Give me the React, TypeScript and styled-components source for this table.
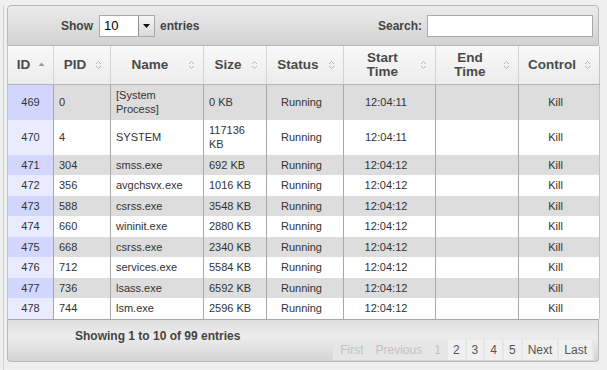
import React from "react"
import styled, { createGlobalStyle } from "styled-components"

const GlobalStyle = createGlobalStyle`
  html, body {
    margin: 0;
    padding: 0;
    background: #efefef;
  }
  body {
    font-family: "Liberation Sans", Arial, sans-serif;
    font-size: 11px;
    color: #333;
  }
`

const Page = styled.div`
  width: 607px;
  height: 370px;
  box-sizing: border-box;
  padding: 5px 8px 0 3px;
`

const Frame = styled.div`
  border-left: 1px solid #d2d2d2;
  padding-left: 3px;
  height: 365px;
`

const Toolbar = styled.div`
  display: flex;
  align-items: center;
  justify-content: space-between;
  height: 39px;
  border: 1px solid #b9b9b9;
  border-radius: 4px 4px 0 0;
  background: linear-gradient(#ececec, #d2d2d2);
  padding: 0 5px 0 53px;
  font-weight: bold;
  font-size: 12px;
  color: #444;
`

const Group = styled.label`
  display: flex;
  align-items: center;
  gap: 5px;
`

const Select = styled.div`
  display: flex;
  height: 20px;
  border: 1px solid #a9a9a9;
  background: #fff;
  margin-left: 1px;
`

const SelectValue = styled.span`
  width: 34px;
  padding-left: 4px;
  line-height: 20px;
  font-weight: normal;
  font-size: 13px;
  color: #000;
`

const SelectButton = styled.span`
  width: 15px;
  border-left: 1px solid #8e8e8e;
  background: linear-gradient(#f6f6f6, #dadada);
  display: flex;
  align-items: center;
  justify-content: center;
`

const SearchInput = styled.div`
  width: 164px;
  height: 20px;
  border: 1px solid #a9a9a9;
  background: #fff;
`

const Table = styled.table`
  width: 592px;
  border-collapse: collapse;
  table-layout: fixed;
  background: #fff;
`

const HeadCell = styled.th<{ $w: number }>`
  position: relative;
  width: ${(p) => p.$w}px;
  height: 38px;
  box-sizing: border-box;
  padding: 0 20px 0 6px;
  background: linear-gradient(#f8f8f8, #ececec);
  border-left: 1px solid #d4d4d4;
  border-bottom: 1px solid #b5b5b5;
  font-size: 13.5px;
  line-height: 14px;
  font-weight: bold;
  color: #4a4a4a;
  text-align: center;
  &:first-child {
    border-left: 1px solid #c4c4c4;
  }
  &:last-child {
    border-right: 1px solid #c4c4c4;
  }
`

const SortIcon = styled.svg`
  position: absolute;
  right: 8px;
  top: 50%;
  margin-top: -5px;
`

const Row = styled.tr<{ $odd: boolean }>`
  background: ${(p) => (p.$odd ? "#dddddd" : "#ffffff")};
`

const Cell = styled.td<{ $center?: boolean; $sorted?: boolean; $odd?: boolean }>`
  padding: 3px 12px 3px 5px;
  line-height: 14.5px;
  border-left: 1px solid #a8a8a8;
  text-align: ${(p) => (p.$center ? "center" : "left")};
  vertical-align: middle;
  color: #333;
  background: ${(p) =>
    p.$sorted ? (p.$odd ? "#d3d6ff" : "#eaebff") : "transparent"};
  &:first-child {
    border-left: 1px solid #c4c4c4;
    padding: 3px 5px;
  }
  &:last-child {
    border-right: 1px solid #c4c4c4;
  }
`

const Footer = styled.div`
  display: flex;
  justify-content: space-between;
  height: 41px;
  border: 1px solid #b9b9b9;
  border-top: 1px solid #a8a8a8;
  border-radius: 0 0 4px 4px;
  background: linear-gradient(#dedede, #ededed 40%, #d4d4d4);
  padding: 0 4px 0 67px;
`

const Info = styled.div`
  padding-top: 9px;
  font-weight: bold;
  font-size: 12px;
  color: #444;
`

const Pager = styled.div`
  align-self: flex-end;
  display: flex;
  gap: 2px;
  margin-bottom: 1px;
  padding: 0 2px;
  background: #e6e6e6;
`

const PageButton = styled.span<{ $disabled?: boolean }>`
  padding: 0 5px;
  height: 20px;
  line-height: 20px;
  font-size: 12px;
  color: ${(p) => (p.$disabled ? "#c2c2c2" : "#555")};
  background: ${(p) => (p.$disabled ? "transparent" : "#f0f0f0")};
`

const columns = [
  { label: "ID", w: 46 },
  { label: "PID", w: 57 },
  { label: "Name", w: 93 },
  { label: "Size", w: 63 },
  { label: "Status", w: 77 },
  { label: "Start Time", w: 92 },
  { label: "End Time", w: 83 },
  { label: "Control", w: 81 },
]

const rows = [
  [469, 0, "[System Process]", "0 KB", "12:04:11"],
  [470, 4, "SYSTEM", "117136 KB", "12:04:11"],
  [471, 304, "smss.exe", "692 KB", "12:04:12"],
  [472, 356, "avgchsvx.exe", "1016 KB", "12:04:12"],
  [473, 588, "csrss.exe", "3548 KB", "12:04:12"],
  [474, 660, "wininit.exe", "2880 KB", "12:04:12"],
  [475, 668, "csrss.exe", "2340 KB", "12:04:12"],
  [476, 712, "services.exe", "5584 KB", "12:04:12"],
  [477, 736, "lsass.exe", "6592 KB", "12:04:12"],
  [478, 744, "lsm.exe", "2596 KB", "12:04:12"],
]

function Sort({ asc }: { asc?: boolean }) {
  return (
    <SortIcon width="7" height="10" viewBox="0 0 7 10">
      {asc ? (
        <path d="M0.5 6 L3.5 2.5 L6.5 6 Z" fill="#9a9a9a" />
      ) : (
        <g fill="none" stroke="#b4b4b4" strokeWidth="1">
          <path d="M1 4 L3.5 1.5 L6 4" />
          <path d="M1 6 L3.5 8.5 L6 6" />
        </g>
      )}
    </SortIcon>
  )
}

export default function App() {
  return (
    <Page>
      <GlobalStyle />
      <Frame>
        <Toolbar>
          <Group>
            Show
            <Select>
              <SelectValue>10</SelectValue>
              <SelectButton>
                <svg width="7" height="4" viewBox="0 0 7 4">
                  <path d="M0 0 H7 L3.5 4 Z" fill="#111" />
                </svg>
              </SelectButton>
            </Select>
            entries
          </Group>
          <Group>
            Search:
            <SearchInput />
          </Group>
        </Toolbar>
        <Table>
          <thead>
            <tr>
              {columns.map((c, i) => (
                <HeadCell key={c.label} $w={c.w}>
                  {c.label.includes(" ") ? (
                    <>
                      {c.label.split(" ")[0]}
                      <br />
                      {c.label.split(" ")[1]}
                    </>
                  ) : (
                    c.label
                  )}
                  <Sort asc={i === 0} />
                </HeadCell>
              ))}
            </tr>
          </thead>
          <tbody>
            {rows.map((r, i) => {
              const odd = i % 2 === 0
              return (
                <Row key={r[0]} $odd={odd}>
                  <Cell $center $sorted $odd={odd}>
                    {r[0]}
                  </Cell>
                  <Cell>{r[1]}</Cell>
                  <Cell>{r[2]}</Cell>
                  <Cell>{r[3]}</Cell>
                  <Cell $center>Running</Cell>
                  <Cell $center>{r[4]}</Cell>
                  <Cell />
                  <Cell $center>Kill</Cell>
                </Row>
              )
            })}
          </tbody>
        </Table>
        <Footer>
          <Info>Showing 1 to 10 of 99 entries</Info>
          <Pager>
            <PageButton $disabled>First</PageButton>
            <PageButton $disabled>Previous</PageButton>
            <PageButton $disabled>1</PageButton>
            <PageButton>2</PageButton>
            <PageButton>3</PageButton>
            <PageButton>4</PageButton>
            <PageButton>5</PageButton>
            <PageButton>Next</PageButton>
            <PageButton>Last</PageButton>
          </Pager>
        </Footer>
      </Frame>
    </Page>
  )
}
